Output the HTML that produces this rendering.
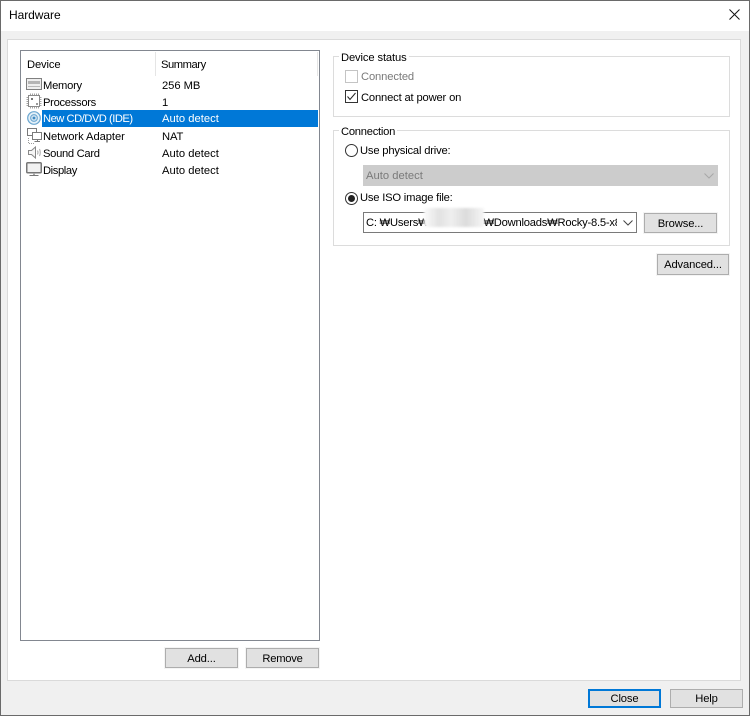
<!DOCTYPE html>
<html>
<head>
<meta charset="utf-8">
<style>
html,body{margin:0;padding:0;width:750px;height:716px;overflow:hidden;background:#f0f0f0}
body{position:relative;font-family:"Liberation Sans","Noto Sans CJK KR",sans-serif;font-size:11.2px;color:#000;letter-spacing:-.12px}
.a{position:absolute;box-sizing:border-box}
.t{position:absolute;white-space:nowrap;line-height:17px;height:17px;margin-top:1px}
.btn{position:absolute;box-sizing:border-box;background:#e1e1e1;border:1px solid #adadad;outline:1px solid #f4f4f4;text-align:center;line-height:20px;white-space:nowrap}
.grp{position:absolute;box-sizing:border-box;border:1px solid #dcdcdc}
.lg{position:absolute;background:#fff;padding:0 2px 0 2px;line-height:14px;height:14px;white-space:nowrap;padding-top:1px}
.cb{position:absolute;box-sizing:border-box;width:13px;height:13px;border:1px solid #333;background:#fff}
svg{position:absolute;display:block;overflow:visible}
.ad{letter-spacing:.03px}
</style>
</head>
<body>
<!-- window frame -->
<div class="a" style="left:0;top:0;width:750px;height:31px;background:#fff"></div>
<div class="a" style="left:0;top:0;width:750px;height:1px;background:#6a6a6a"></div>
<div class="a" style="left:0;top:0;width:1px;height:716px;background:#6a6a6a"></div>
<div class="a" style="left:749px;top:0;width:1px;height:716px;background:#6a6a6a"></div>
<div class="a" style="left:0;top:715px;width:750px;height:1px;background:#6a6a6a"></div>
<div class="t" style="left:9px;top:6px;font-size:12px;letter-spacing:-.05px">Hardware</div>
<svg style="left:729px;top:9px" width="12" height="12" viewBox="0 0 12 12"><path d="M.5 .5L10.5 10.5M10.5 .5L.5 10.5" stroke="#111" stroke-width="1" fill="none"/></svg>

<!-- main panel -->
<div class="a" style="left:7px;top:39px;width:734px;height:642px;background:#fff;border:1px solid #dadada"></div>

<!-- list -->
<div class="a" style="left:20px;top:50px;width:300px;height:591px;background:#fff;border:1px solid #828790"></div>
<div class="a" style="left:155px;top:52px;width:1px;height:24px;background:#e5e5e5"></div>
<div class="a" style="left:317px;top:52px;width:1px;height:24px;background:#e5e5e5"></div>
<div class="t" style="left:27px;top:56px">Device</div>
<div class="t" style="left:161px;top:56px;letter-spacing:-.45px">Summary</div>
<div class="a" style="left:42px;top:110px;width:276px;height:17px;background:#0078d7"></div>

<div class="t" style="left:43px;top:77px;letter-spacing:-.25px">Memory</div><div class="t" style="left:162px;top:77px;letter-spacing:-.05px">256 MB</div>
<div class="t" style="left:43px;top:94px;letter-spacing:-.3px">Processors</div><div class="t" style="left:162px;top:94px">1</div>
<div class="t" style="left:43px;top:110px;color:#fff;letter-spacing:-.5px">New CD/DVD (IDE)</div><div class="t ad" style="left:162px;top:110px;color:#fff">Auto detect</div>
<div class="t" style="left:43px;top:128px;letter-spacing:-.06px">Network Adapter</div><div class="t" style="left:162px;top:128px">NAT</div>
<div class="t" style="left:43px;top:145px;letter-spacing:-.3px">Sound Card</div><div class="t ad" style="left:162px;top:145px">Auto detect</div>
<div class="t" style="left:43px;top:162px;letter-spacing:-.4px">Display</div><div class="t ad" style="left:162px;top:162px">Auto detect</div>

<!-- icons -->
<svg style="left:26px;top:78px" width="16" height="14" viewBox="0 0 16 14"><rect x=".5" y=".5" width="15" height="11" fill="#eee" stroke="#808080"/><rect x="2" y="3" width="12" height="3" fill="#b4b4b4"/><path d="M2 8.5H14" stroke="#b8b8b8"/></svg>
<svg style="left:26px;top:93px" width="16" height="16" viewBox="0 0 16 16"><rect x="2.5" y="2.5" width="11" height="11" fill="#fff" stroke="#8a8a8a"/><path d="M4.500 .5V2M6.500 .5V2M8.500 .5V2M10.500 .5V2M12.500 .5V2M4.500 14V15.500M6.500 14V15.500M8.500 14V15.500M10.500 14V15.500M12.500 14V15.500M.5 4.500H2M.5 6.500H2M.5 8.500H2M.5 10.500H2M.5 12.500H2M14 4.500H15.500M14 6.500H15.500M14 8.500H15.500M14 10.500H15.500M14 12.500H15.500" stroke="#a4a4a4"/><rect x="5" y="5" width="2" height="2" fill="#777"/><rect x="10" y="10" width="2" height="2" fill="#999"/></svg>
<svg style="left:27px;top:111px" width="14" height="14" viewBox="0 0 14 14"><circle cx="7" cy="7" r="6.300" fill="#e4f0f8" stroke="#6aa6d0" stroke-width="1.200"/><circle cx="7" cy="7" r="3.400" fill="#cfe3f1" stroke="#6aa6d0"/><circle cx="7" cy="7" r="1.400" fill="#3f8ac2"/></svg>
<svg style="left:27px;top:128px" width="16" height="16" viewBox="0 0 16 16"><rect x=".5" y=".5" width="9" height="7" fill="#fff" stroke="#7a7a7a"/><rect x="5.500" y="4.500" width="9" height="7" fill="#fff" stroke="#7a7a7a"/><path d="M10.500 11.500V13.500M7.500 13.500H13" stroke="#7a7a7a"/><path d="M1.500 10V15.500H7" stroke="#999" stroke-dasharray="1 1" fill="none"/></svg>
<svg style="left:28px;top:146px" width="14" height="14" viewBox="0 0 14 14"><path d="M.5 4.500H3.500L7.500 1V12L3.500 8.500H.5Z" fill="#f6f6f6" stroke="#888"/><path d="M9.500 4.500Q10.500 6.500 9.500 8.500M11.500 3Q13 6.500 11.500 10" stroke="#aaa" fill="none"/></svg>
<svg style="left:26px;top:162px" width="16" height="15" viewBox="0 0 16 15"><rect x=".75" y=".75" width="14.500" height="10" rx="1" fill="#f2f2f2" stroke="#777" stroke-width="1.500"/><path d="M8 11V13" stroke="#aaa" stroke-width="2"/><path d="M3.500 13.500H12.500" stroke="#777"/></svg>

<!-- device status -->
<div class="grp" style="left:333px;top:56px;width:397px;height:61px"></div>
<div class="lg" style="left:339px;top:50px">Device status</div>
<div class="cb" style="left:345px;top:70px;border-color:#c4c4c4"></div>
<div class="t" style="left:361px;top:68px;color:#7a7a7a">Connected</div>
<div class="cb" style="left:345px;top:90px"></div>
<svg style="left:345px;top:90px" width="13" height="13" viewBox="0 0 13 13"><path d="M2.500 6.500L5 9.500L10.500 3" stroke="#222" fill="none"/></svg>
<div class="t" style="left:361px;top:89px;letter-spacing:-.16px">Connect at power on</div>

<!-- connection -->
<div class="grp" style="left:333px;top:130px;width:397px;height:116px"></div>
<div class="lg" style="left:339px;top:124px;letter-spacing:-.25px">Connection</div>
<svg style="left:345px;top:144px" width="13" height="13" viewBox="0 0 13 13"><circle cx="6.500" cy="6.500" r="6" fill="#fff" stroke="#333"/></svg>
<div class="t" style="left:360px;top:142px;letter-spacing:-.18px">Use physical drive:</div>
<div class="a" style="left:363px;top:165px;width:355px;height:21px;background:#ccc"></div>
<div class="t ad" style="left:366px;top:167px;color:#7a7a7a">Auto detect</div>
<svg style="left:704px;top:173px" width="10" height="6" viewBox="0 0 10 6"><path d="M.5 .5L5 5L9.500 .5" stroke="#a8a8a8" fill="none"/></svg>
<svg style="left:345px;top:192px" width="13" height="13" viewBox="0 0 13 13"><circle cx="6.500" cy="6.500" r="6" fill="#fff" stroke="#333"/><circle cx="6.500" cy="6.500" r="3.500" fill="#222"/></svg>
<div class="t" style="left:360px;top:189px;letter-spacing:-.2px">Use ISO image file:</div>
<div class="a" style="left:363px;top:212px;width:274px;height:21px;background:#fff;border:1px solid #7a7a7a"></div>
<div class="a" style="left:366px;top:213px;width:251px;height:19px;overflow:hidden"><div class="t" style="left:0;top:1px;letter-spacing:-.22px">C: ₩Users₩<span style="display:inline-block;width:55px"></span>₩Downloads₩Rocky-8.5-x86_64</div></div>
<div class="a" style="left:424px;top:208px;width:60px;height:19px;background:linear-gradient(90deg,#fbfbfb,#e2e2e2 25%,#efefef 45%,#dcdcdc 70%,#f6f6f6);filter:blur(1px)"></div>
<svg style="left:623px;top:220px" width="10" height="6" viewBox="0 0 10 6"><path d="M.5 .5L5 5L9.500 .5" stroke="#444" fill="none"/></svg>
<div class="btn" style="left:644px;top:213px;width:73px;height:20px">Browse...</div>
<div class="btn" style="left:657px;top:254px;width:72px;height:21px">Advanced...</div>

<!-- bottom buttons -->
<div class="btn" style="left:165px;top:648px;width:73px;height:20px">Add...</div>
<div class="btn" style="left:246px;top:648px;width:73px;height:20px;letter-spacing:-.25px">Remove</div>
<div class="btn" style="left:588px;top:689px;width:73px;height:19px;border:2px solid #0078d7;outline:none;line-height:17px">Close</div>
<div class="btn" style="left:670px;top:689px;width:73px;height:19px;outline:none;line-height:19px">Help</div>
</body>
</html>
